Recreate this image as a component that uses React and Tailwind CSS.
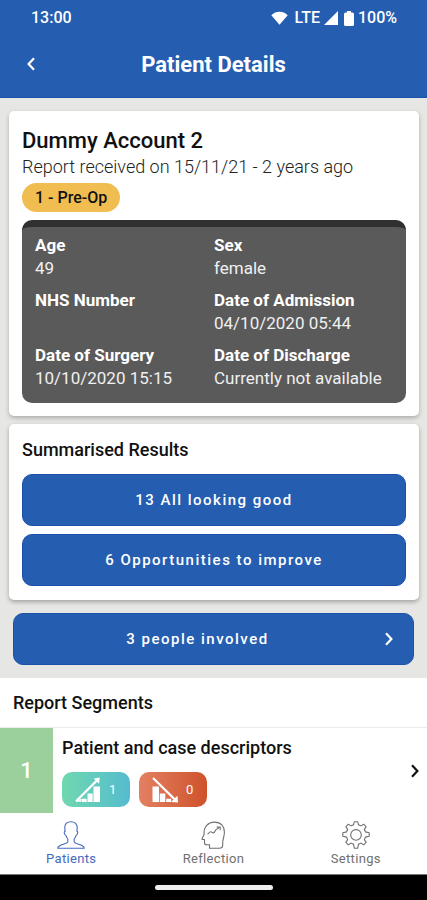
import React from "react";

const details = [
  ["Age", "49"],
  ["Sex", "female"],
  ["NHS Number", ""],
  ["Date of Admission", "04/10/2020 05:44"],
  ["Date of Surgery", "10/10/2020 15:15"],
  ["Date of Discharge", "Currently not available"],
];

function Chevron({ className, left = false }) {
  return (
    <svg viewBox="0 0 8 14" className={className} fill="none" stroke="currentColor" strokeWidth="2.2" aria-hidden="true">
      <path d={left ? "M7 1.2 1.6 7 7 12.8" : "M1 1.2 6.4 7 1 12.8"} />
    </svg>
  );
}

function StatusBar() {
  return (
    <div className="flex h-9 items-center justify-between pl-[31px] pr-[30px] text-base font-medium">
      <span>13:00</span>
      <div className="flex items-center">
        <svg viewBox="0 0 17 14" className="mr-1.5 h-3.5 w-[17px]" fill="currentColor" aria-hidden="true">
          <path d="M0.3 4.2C4.8-0.4 12.2-0.4 16.7 4.2L8.5 13.8Z" />
        </svg>
        <span>LTE</span>
        <svg viewBox="0 0 14 14" className="ml-1 h-3.5 w-3.5" fill="currentColor" aria-hidden="true">
          <path d="M14 0V14H0Z" />
        </svg>
        <svg viewBox="0 0 10 15" className="ml-1.5 mr-1 h-[15px] w-2.5" fill="currentColor" aria-hidden="true">
          <path d="M3 0h4v1.6h1.4Q10 1.6 10 3.2v10.2Q10 15 8.4 15H1.6Q0 15 0 13.4V3.2Q0 1.6 1.6 1.6H3Z" />
        </svg>
        <span>100%</span>
      </div>
    </div>
  );
}

function GrowthIcon() {
  return (
    <svg viewBox="0 0 26 26" className="size-[26px]" fill="currentColor" aria-hidden="true">
      <path d="M18.500 9.500h6.500v15.500h-6.500zM12.500 16.500h5.200v8.500h-5.200zM6.500 21.800h5.200v3.200H6.500z" />
      <path d="M1 24.2 22 3.4" stroke="currentColor" strokeWidth="2.2" />
      <path d="M24.8 0.6 24 6.8 18.6 1.4Z" />
      <path d="M0.6 24.8 6 21.6V24.8Z" />
    </svg>
  );
}

function DeclineIcon() {
  return (
    <svg viewBox="0 0 26 26" className="size-[26px]" fill="currentColor" aria-hidden="true">
      <path d="M0.5 9.500h6.500v15.500h-6.500zM7.800 16.500h5.500v8.500H7.800zM14.200 21.800h5v3.200h-5z" />
      <path d="M1 1 23 22.6" stroke="currentColor" strokeWidth="2.2" />
      <path d="M26 25.4 25.4 18.8 19 25Z" />
    </svg>
  );
}

function PatientIcon() {
  return (
    <svg viewBox="0 0 28 28" className="size-7" fill="none" stroke="currentColor" strokeWidth="1.1" strokeLinejoin="round" aria-hidden="true">
      <path d="M14 0.8c-4 0-6.2 2.4-6.2 5.8 0 1.4.2 2.6.3 3.6-.9.2-1 .9-.7 2 .3 1.200.7 1.900 1.400 2 .4 1.600 1.100 2.800 2 3.800v2.800c-.5 1.500-3.300 2-6 2.900C2.200 24.600.9 25.300.8 27.300h26.400c-.1-2-1.400-2.700-4-3.600-2.700-.9-5.500-1.400-6-2.900V18c.9-1 1.600-2.200 2-3.800.7-.1 1.100-.8 1.400-2 .3-1.100.2-1.800-.7-2 .1-1 .3-2.200.3-3.600C20.200 3.200 18 .8 14 .8Z" />
    </svg>
  );
}

function ReflectionIcon() {
  return (
    <svg viewBox="0 0 28 28" className="size-7" fill="none" stroke="currentColor" strokeWidth="1.1" strokeLinejoin="round" aria-hidden="true">
      <path d="M10.500 27.300v-3.500H7.500c-1.500 0-2-.8-2-2v-3.300H3.600c-.6 0-.8-.5-.5-1l2-3.900c-.7-7.200 3.700-12.500 10.500-12.500 6.300 0 9.800 4.300 9.800 10 0 4.600-1.700 6.900-1.700 10.600v2.600c0 2.200-1.200 3-3.500 3Z" />
      <path d="M8.500 13.200c1.400-.3 1.500-2.500 3.200-2.500 1.500 0 1.400 1.400 2.800 1.200 1.800-.3 1.500-3.300 3.500-3.900l2.500-1.600" />
      <path d="M17.800 6.100h3.400v3.200" />
    </svg>
  );
}

function SettingsIcon() {
  return (
    <svg viewBox="0 0 28 28" className="size-7" fill="none" stroke="currentColor" strokeWidth="1.1" strokeLinejoin="round" aria-hidden="true">
      <path d="M12.3 0.8h3.400l.8 3.100q1.300.3 2.400 1l2.800-1.700 2.400 2.400-1.700 2.800q.7 1.200 1 2.500l3.800.9v3.400l-3.800.9q-.3 1.300-1 2.500l1.700 2.800-2.400 2.400-2.800-1.700q-1.100.7-2.400 1l-.8 4.100h-3.400l-.8-4.100q-1.300-.3-2.400-1l-2.800 1.700-2.400-2.400 1.700-2.800q-.7-1.200-1-2.500l-3.800-.9v-3.400l3.800-.9q.3-1.300 1-2.500L3.900 5.600l2.400-2.400 2.800 1.700q1.100-.7 2.400-1Z" />
      <circle cx="14" cy="13.900" r="5.300" />
    </svg>
  );
}

const actionClass =
  "flex h-[52px] w-full items-center justify-center rounded-[10px] border border-[#1b51a8] bg-[#255db1] text-[15px] font-medium tracking-widest text-white";

const tabs = [
  ["Patients", PatientIcon, true],
  ["Reflection", ReflectionIcon, false],
  ["Settings", SettingsIcon, false],
];

export default function App() {
  return (
    <div className="flex min-h-screen flex-col bg-[#e6e6e4] font-['Roboto','Liberation_Sans',sans-serif] text-[#111]">
      <header className="border-b border-[#1b51a8] bg-[#255db1] text-white">
        <StatusBar />
        <div className="grid h-[61px] grid-cols-[64px_1fr_64px] items-center">
          <button type="button" aria-label="Back" className="flex h-full items-center pb-1.5 pl-[27px]">
            <Chevron left className="h-3.5 w-2" />
          </button>
          <h1 className="pb-1 text-center text-[22px] font-bold leading-7">Patient Details</h1>
        </div>
      </header>

      <main className="flex flex-1 flex-col">
        <div className="flex flex-col gap-2 pl-[9px] pr-2 pt-[13px]">
          <section className="rounded-[5px] bg-white px-[13px] pb-[13px] pt-4 shadow-[0_2px_4px_rgba(0,0,0,0.25)]">
            <h2 className="text-[22px] font-medium leading-7">Dummy Account 2</h2>
            <p className="text-lg font-light leading-6 text-[#222]">Report received on 15/11/21 - 2 years ago</p>
            <span className="mt-1 inline-flex h-[29px] items-center rounded-full bg-[#efbd50] px-[13px] text-base font-medium">
              1 - Pre-Op
            </span>
            <dl className="mt-2 grid grid-cols-2 gap-y-[9px] rounded-[10px] border-t-[7px] border-[#303030] bg-[#5a5a5a] px-[13px] pb-[13px] pt-[7px] text-[17px] leading-[23px] text-white">
              {details.map(([label, value]) => (
                <div key={label} className="min-h-[46px] whitespace-nowrap">
                  <dt className="font-bold">{label}</dt>
                  <dd className="text-[#f0f0f0]">{value}</dd>
                </div>
              ))}
            </dl>
          </section>

          <section className="rounded-[5px] bg-white px-[13px] pb-3.5 pt-3.5 shadow-[0_2px_4px_rgba(0,0,0,0.3)]">
            <h2 className="text-lg font-medium leading-6">Summarised Results</h2>
            <div className="mt-3 flex flex-col gap-2">
              <button type="button" className={actionClass}>13 All looking good</button>
              <button type="button" className={actionClass}>6 Opportunities to improve</button>
            </div>
          </section>
        </div>

        <div className="px-[13px] pb-[13px] pt-[13px]">
          <button type="button" className={actionClass + " gap-1 pr-5"}>
            <span className="flex-1">3 people involved</span>
            <Chevron className="h-3.5 w-2" />
          </button>
        </div>

        <section className="flex-1 bg-white">
          <h2 className="px-[13px] py-[13px] text-lg font-medium leading-[23px]">Report Segments</h2>
          <a href="#segment-1" className="flex h-[86px] border-t border-[#ebebeb]">
            <span className="flex w-[53px] items-center justify-center bg-[#9bcf9c] text-[22px] font-medium text-white">1</span>
            <div className="flex-1 pl-[9px] pt-2">
              <h3 className="text-lg font-medium leading-6">Patient and case descriptors</h3>
              <div className="mt-3 flex gap-[9px] text-[13px] text-white">
                <span className="flex h-[35px] w-[68px] items-center gap-2 rounded-[10px] bg-linear-to-r from-[#70d8ae] to-[#55bbce] pl-[13px]">
                  <GrowthIcon />1
                </span>
                <span className="flex h-[35px] w-[68px] items-center gap-2 rounded-[10px] bg-linear-to-r from-[#e38062] to-[#ce5229] pl-[13px]">
                  <DeclineIcon />0
                </span>
              </div>
            </div>
            <Chevron className="mr-2 h-3.5 w-2 self-center" />
          </a>
        </section>
      </main>

      <nav className="grid h-[61px] grid-cols-3 border-b border-[#777] bg-white">
        {tabs.map(([label, Icon, active]) => (
          <a
            key={label}
            href={"#" + label.toLowerCase()}
            className={"flex flex-col items-center pt-[7px] text-[13px] leading-5 tracking-wide " + (active ? "text-[#4669bd]" : "text-[#707070]")}
          >
            <Icon />
            {label}
          </a>
        ))}
      </nav>
      <footer className="flex h-[25px] items-center justify-center bg-black">
        <div className="h-[5px] w-[118px] rounded-full bg-[#eee]" />
      </footer>
    </div>
  );
}
